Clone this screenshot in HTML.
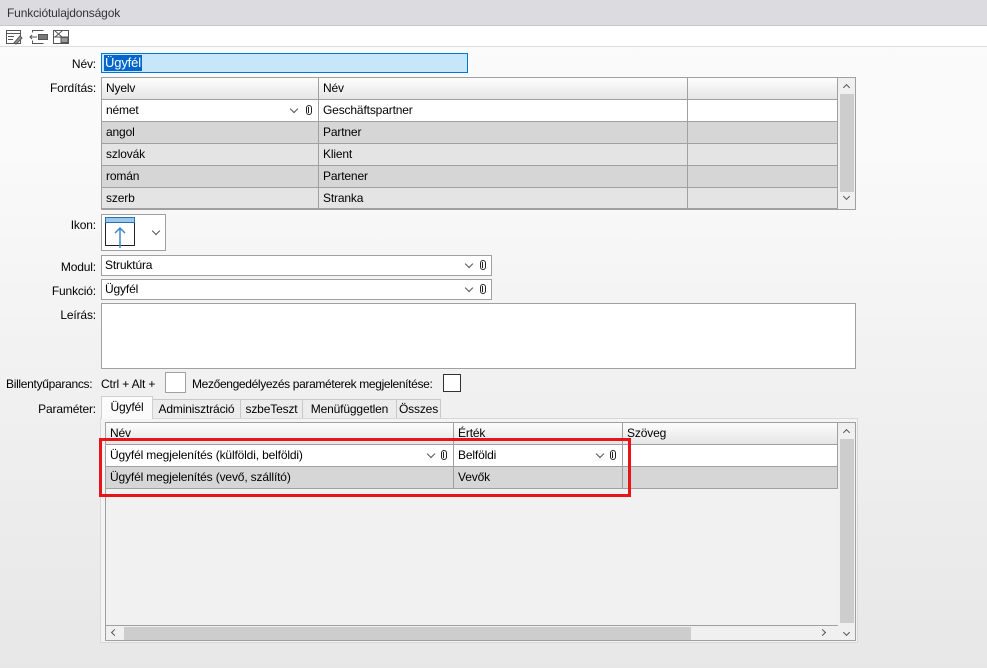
<!DOCTYPE html>
<html><head><meta charset="utf-8"><style>
*{box-sizing:border-box;margin:0;padding:0}
body{width:987px;height:668px;overflow:hidden;position:relative;font-family:"Liberation Sans",sans-serif;font-size:12px;letter-spacing:-0.15px;color:#000;background:linear-gradient(#fbfbfb 0px,#fafafa 150px,#f0f0f0 400px,#e7e7e7 668px)}
.a{position:absolute}
.lbl{position:absolute;text-align:right;width:96px;left:0}
.cell{position:absolute;border-right:1px solid #a0a0a0;border-bottom:1px solid #a0a0a0;padding-left:4px;line-height:21px;white-space:nowrap;overflow:hidden}
.hd{background:linear-gradient(#fdfdfd,#e6e6e6)}
.w{background:#fff}.d{background:#d6d6d6}.l{background:#e4e4e4}
.chev{position:absolute;width:6px;height:6px;border-right:1px solid #555;border-bottom:1px solid #555;transform:rotate(45deg)}
.clip{position:absolute;width:6px;height:10px;border:1.5px solid #222;border-radius:3px}
.clip:after{content:"";position:absolute;left:1px;top:1px;width:1px;height:6px;background:#222}
.tab{position:absolute;top:399px;height:19px;border:1px solid #c8c8c8;border-bottom:none;background:#ececec;line-height:18px;text-align:center}
</style></head><body>
<div class="a" style="left:0;top:0;width:987px;height:26px;background:#dcdce0;border-bottom:1px solid #c8c8cc"></div>
<div class="a" style="left:7px;top:6px;color:#333">Funkciótulajdonságok</div>
<div class="a" style="left:0;top:26px;width:987px;height:21px;background:#fff;border-bottom:1px solid #ddd"></div>
<svg class="a" style="left:5px;top:28px" width="70" height="18" viewBox="0 0 70 18" fill="none" stroke="#555" stroke-width="1">
<rect x="1.5" y="2.5" width="14" height="13"/><line x1="1.5" y1="5.5" x2="15.5" y2="5.5"/><line x1="3" y1="8.5" x2="9" y2="8.5"/><line x1="3" y1="11.5" x2="8" y2="11.5"/><path d="M9 15 L15 8 L17 10 L11 16 Z" fill="#999"/>
<path d="M27.5 4.5 V2.5 H38.5 M27.5 12.5 V15.5 H38.5"/><rect x="33.5" y="6.5" width="9" height="5" fill="#777"/><path d="M25 9 H32 M27 7 L25 9 L27 11"/>
<rect x="48.5" y="2.5" width="15" height="13"/><line x1="48.5" y1="9" x2="63.5" y2="9"/><path d="M50 3 L57 9 M57 3 L50 9"/><rect x="56" y="9.5" width="7" height="5" fill="#999"/>
</svg>

<div class="lbl" style="top:57px">Név:</div>
<div class="a" style="left:101px;top:53px;width:367px;height:20px;background:#c8e6fa;border:1px solid #0078d7"></div>
<div class="a" style="left:104px;top:55px;background:#0066cc;color:#fff;padding:0 1px;line-height:16px;font-size:13px">Ügyfél</div>

<div class="lbl" style="top:81px">Fordítás:</div>
<div class="a" style="left:101px;top:77px;width:755px;height:133px;border:1px solid #a0a0a0;background:#fff"></div>
<div class="cell hd" style="left:102px;top:78px;width:217px;height:22px">Nyelv</div>
<div class="cell hd" style="left:319px;top:78px;width:369px;height:22px">Név</div>
<div class="cell hd" style="left:688px;top:78px;width:150px;height:22px"></div>
<div class="cell w" style="left:102px;top:100px;width:217px;height:22px">német</div>
<div class="chev" style="left:291px;top:106px"></div><div class="clip" style="left:306px;top:105px"></div>
<div class="cell w" style="left:319px;top:100px;width:369px;height:22px">Geschäftspartner</div>
<div class="cell w" style="left:688px;top:100px;width:150px;height:22px"></div>
<div class="cell d" style="left:102px;top:122px;width:217px;height:22px">angol</div><div class="cell d" style="left:319px;top:122px;width:369px;height:22px">Partner</div><div class="cell d" style="left:688px;top:122px;width:150px;height:22px"></div>
<div class="cell l" style="left:102px;top:144px;width:217px;height:22px">szlovák</div><div class="cell l" style="left:319px;top:144px;width:369px;height:22px">Klient</div><div class="cell l" style="left:688px;top:144px;width:150px;height:22px"></div>
<div class="cell d" style="left:102px;top:166px;width:217px;height:22px">román</div><div class="cell d" style="left:319px;top:166px;width:369px;height:22px">Partener</div><div class="cell d" style="left:688px;top:166px;width:150px;height:22px"></div>
<div class="cell l" style="left:102px;top:188px;width:217px;height:21px">szerb</div><div class="cell l" style="left:319px;top:188px;width:369px;height:21px">Stranka</div><div class="cell l" style="left:688px;top:188px;width:150px;height:21px"></div>
<div class="a" style="left:838px;top:78px;width:17px;height:131px;background:#f0f0f0"></div>
<div class="a" style="left:840px;top:94px;width:14px;height:98px;background:#cdcdcd"></div>
<div class="chev" style="left:844px;top:85px;width:5px;height:5px;transform:rotate(225deg)"></div>
<div class="chev" style="left:844px;top:194px;width:5px;height:5px"></div>

<div class="lbl" style="top:218px">Ikon:</div>
<div class="a" style="left:101px;top:214px;width:65px;height:37px;background:#fff;border:1px solid #a0a0a0"></div>
<svg class="a" style="left:105px;top:217px" width="32" height="32"><rect x="0.5" y="0.5" width="29" height="28" fill="none" stroke="#222"/><rect x="0.5" y="0.5" width="29" height="5" fill="#9cc8ee" stroke="#2a6fb0"/><path d="M15 31 V11 M10 16 L15 11 L20 16" stroke="#3a87cc" stroke-width="1.5" fill="none"/></svg>
<div class="chev" style="left:153px;top:228px"></div>

<div class="lbl" style="top:260px">Modul:</div>
<div class="a" style="left:101px;top:255px;width:391px;height:21px;background:#fff;border:1px solid #a0a0a0;padding-left:3px;line-height:19px">Struktúra</div>
<div class="chev" style="left:466px;top:261px"></div><div class="clip" style="left:480px;top:260px"></div>
<div class="lbl" style="top:284px">Funkció:</div>
<div class="a" style="left:101px;top:279px;width:391px;height:21px;background:#fff;border:1px solid #a0a0a0;padding-left:3px;line-height:19px">Ügyfél</div>
<div class="chev" style="left:466px;top:285px"></div><div class="clip" style="left:480px;top:284px"></div>
<div class="lbl" style="top:308px">Leírás:</div>
<div class="a" style="left:101px;top:303px;width:755px;height:66px;background:#fff;border:1px solid #a0a0a0"></div>

<div class="a" style="left:6px;top:377px;letter-spacing:-0.3px">Billentyűparancs:</div>
<div class="a" style="left:101px;top:377px">Ctrl + Alt +</div>
<div class="a" style="left:165px;top:372px;width:21px;height:21px;background:#fff;border:1px solid #a0a0a0"></div>
<div class="a" style="left:192px;top:377px;letter-spacing:-0.35px">Mezőengedélyezés paraméterek megjelenítése:</div>
<div class="a" style="left:443px;top:374px;width:18px;height:18px;background:#fff;border:1px solid #333"></div>

<div class="lbl" style="top:402px">Paraméter:</div>
<div class="a" style="left:100px;top:418px;width:758px;height:225px;border:1px solid #d8d8d8;background:#f4f4f4"></div>
<div class="tab" style="left:152px;width:89px">Adminisztráció</div>
<div class="tab" style="left:240px;width:63px">szbeTeszt</div>
<div class="tab" style="left:302px;width:95px">Menüfüggetlen</div>
<div class="tab" style="left:396px;width:45px">Összes</div>
<div class="tab" style="left:101px;top:396px;height:23px;width:52px;background:#fbfbfb;border-color:#d0d0d0;line-height:21px">Ügyfél</div>
<div class="a" style="left:105px;top:422px;width:751px;height:219px;border:1px solid #a0a0a0;background:#f1f1f1"></div>
<div class="cell hd" style="left:106px;top:423px;width:348px;height:22px">Név</div>
<div class="cell hd" style="left:454px;top:423px;width:169px;height:22px">Érték</div>
<div class="cell hd" style="left:623px;top:423px;width:215px;height:22px">Szöveg</div>
<div class="cell w" style="left:106px;top:445px;width:348px;height:22px">Ügyfél megjelenítés (külföldi, belföldi)</div>
<div class="chev" style="left:428px;top:451px"></div><div class="clip" style="left:441px;top:450px"></div>
<div class="cell w" style="left:454px;top:445px;width:169px;height:22px">Belföldi</div>
<div class="chev" style="left:597px;top:451px"></div><div class="clip" style="left:610px;top:450px"></div>
<div class="cell w" style="left:623px;top:445px;width:215px;height:22px"></div>
<div class="cell d" style="left:106px;top:467px;width:348px;height:22px">Ügyfél megjelenítés (vevő, szállító)</div>
<div class="cell d" style="left:454px;top:467px;width:169px;height:22px">Vevők</div>
<div class="cell d" style="left:623px;top:467px;width:215px;height:22px"></div>
<div class="a" style="left:838px;top:423px;width:17px;height:217px;background:#f0f0f0"></div>
<div class="a" style="left:840px;top:439px;width:14px;height:184px;background:#cdcdcd"></div>
<div class="chev" style="left:844px;top:430px;width:5px;height:5px;transform:rotate(225deg)"></div>
<div class="chev" style="left:844px;top:630px;width:5px;height:5px"></div>
<div class="a" style="left:106px;top:625px;width:732px;height:15px;background:#f0f0f0;border-top:1px solid #a0a0a0"></div>
<div class="a" style="left:124px;top:627px;width:567px;height:13px;background:#cdcdcd"></div>
<div class="chev" style="left:112px;top:630px;width:5px;height:5px;transform:rotate(135deg)"></div>
<div class="chev" style="left:820px;top:630px;width:5px;height:5px;transform:rotate(-45deg)"></div>

<div class="a" style="left:99px;top:438px;width:532px;height:59px;border:3px solid #e8141a"></div>
</body></html>
